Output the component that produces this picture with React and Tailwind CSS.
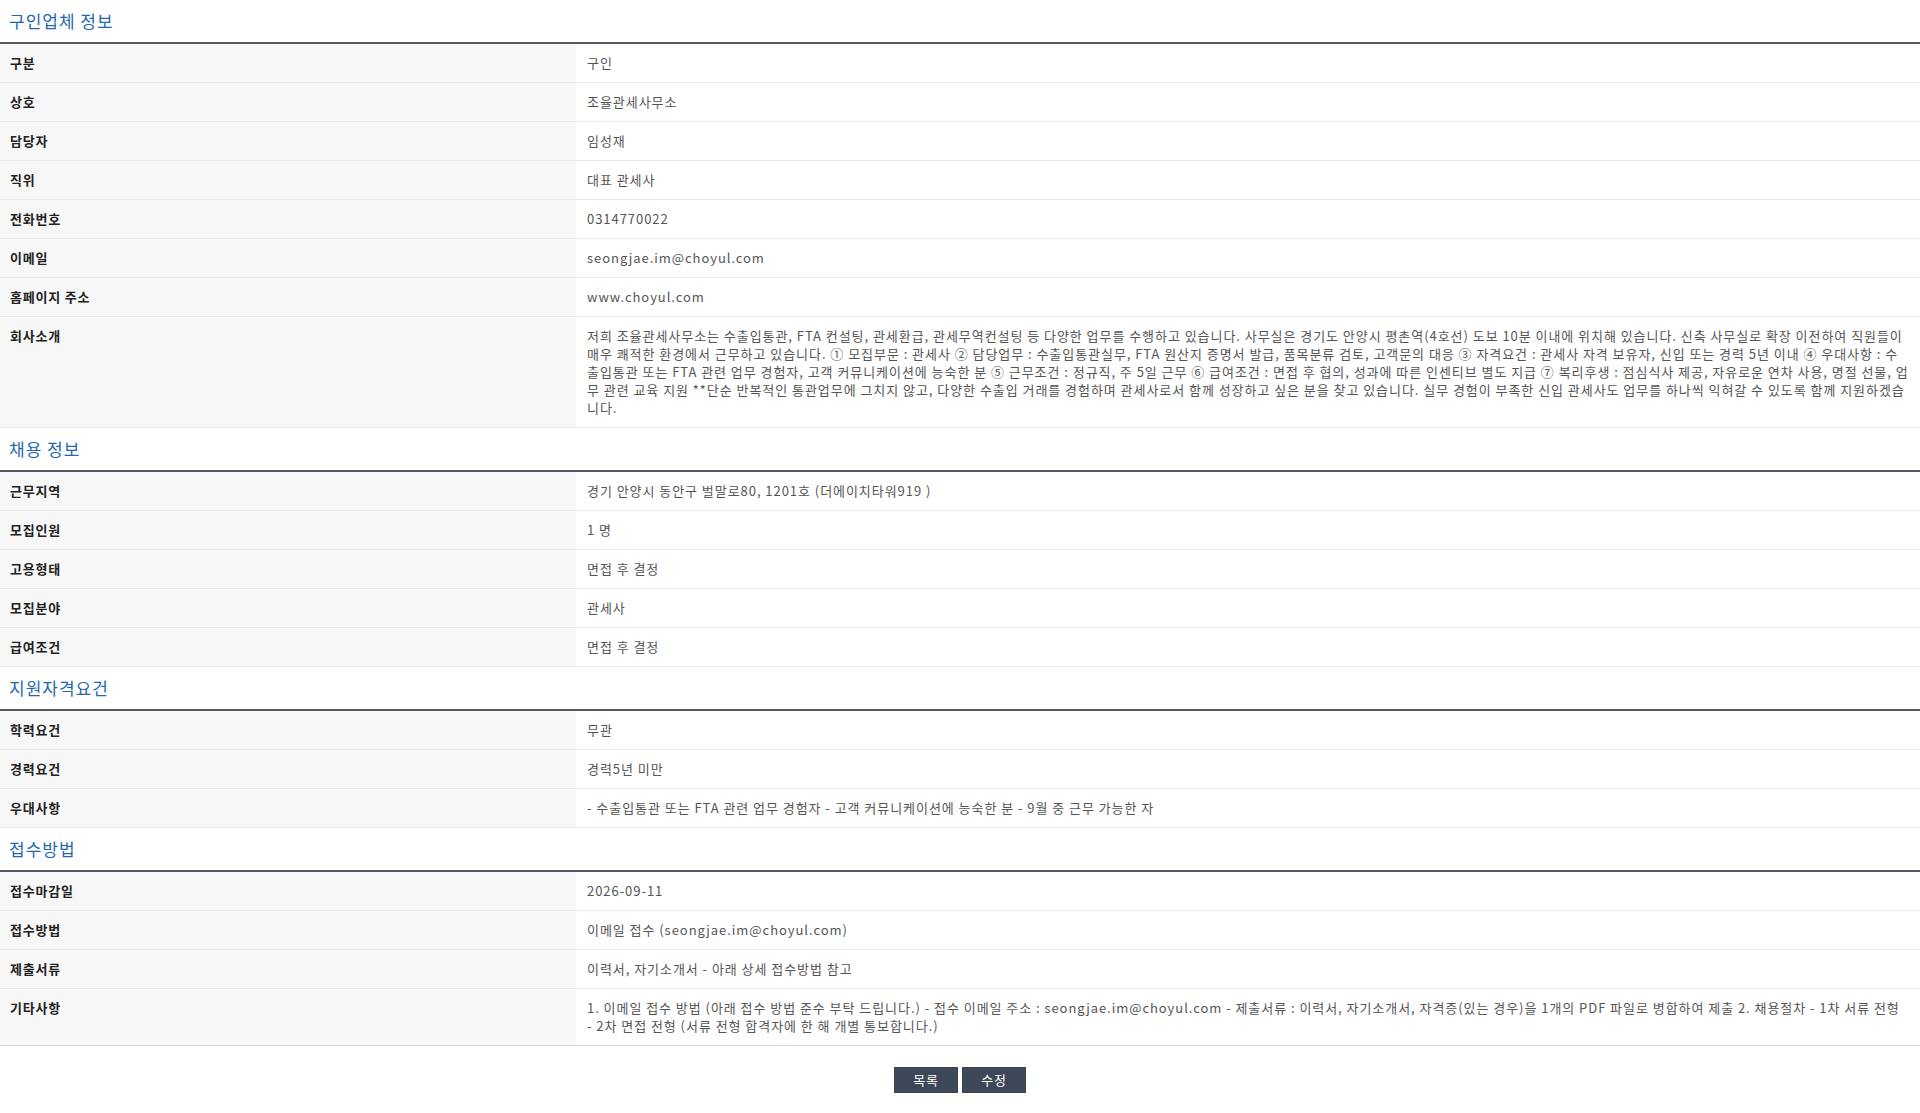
// 구인 상세 페이지 —— 구인업체 / 채용 / 지원자격 / 접수방법
const sections = [
  {
    title: '구인업체 정보',
    rows: [
      ['구분', '구인'],
      ['상호', '조율관세사무소'],
      ['담당자', '임성재'],
      ['직위', '대표 관세사'],
      ['전화번호', '0314770022'],
      ['이메일', 'seongjae.im@choyul.com'],
      ['홈페이지 주소', 'www.choyul.com'],
      [
        '회사소개',
        '저희 조율관세사무소는 수출입통관, FTA 컨설팅, 관세환급, 관세무역컨설팅 등 다양한 업무를 수행하고 있습니다. 사무실은 경기도 안양시 평촌역(4호선) 도보 10분 이내에 위치해 있습니다. 신축 사무실로 확장 이전하여 직원들이 매우 쾌적한 환경에서 근무하고 있습니다. ① 모집부문 : 관세사 ② 담당업무 : 수출입통관실무, FTA 원산지 증명서 발급, 품목분류 검토, 고객문의 대응 ③ 자격요건 : 관세사 자격 보유자, 신입 또는 경력 5년 이내 ④ 우대사항 : 수출입통관 또는 FTA 관련 업무 경험자, 고객 커뮤니케이션에 능숙한 분 ⑤ 근무조건 : 정규직, 주 5일 근무 ⑥ 급여조건 : 면접 후 협의, 성과에 따른 인센티브 별도 지급 ⑦ 복리후생 : 점심식사 제공, 자유로운 연차 사용, 명절 선물, 업무 관련 교육 지원 **단순 반복적인 통관업무에 그치지 않고, 다양한 수출입 거래를 경험하며 관세사로서 함께 성장하고 싶은 분을 찾고 있습니다. 실무 경험이 부족한 신입 관세사도 업무를 하나씩 익혀갈 수 있도록 함께 지원하겠습니다.',
      ],
    ],
  },
  {
    title: '채용 정보',
    rows: [
      ['근무지역', '경기 안양시 동안구 벌말로80, 1201호 (더에이치타워919 )'],
      ['모집인원', '1 명'],
      ['고용형태', '면접 후 결정'],
      ['모집분야', '관세사'],
      ['급여조건', '면접 후 결정'],
    ],
  },
  {
    title: '지원자격요건',
    rows: [
      ['학력요건', '무관'],
      ['경력요건', '경력5년 미만'],
      ['우대사항', '- 수출입통관 또는 FTA 관련 업무 경험자 - 고객 커뮤니케이션에 능숙한 분 - 9월 중 근무 가능한 자'],
    ],
  },
  {
    title: '접수방법',
    rows: [
      ['접수마감일', '2026-09-11'],
      ['접수방법', '이메일 접수 (seongjae.im@choyul.com)'],
      ['제출서류', '이력서, 자기소개서 - 아래 상세 접수방법 참고'],
      [
        '기타사항',
        '1. 이메일 접수 방법 (아래 접수 방법 준수 부탁 드립니다.) - 접수 이메일 주소 : seongjae.im@choyul.com - 제출서류 : 이력서, 자기소개서, 자격증(있는 경우)을 1개의 PDF 파일로 병합하여 제출 2. 채용절차 - 1차 서류 전형 - 2차 면접 전형 (서류 전형 합격자에 한 해 개별 통보합니다.)',
      ],
    ],
  },
]

function Section({ title, rows, last }) {
  return (
    <section>
      <h3 className="flex h-[44px] items-center border-b-2 border-[#555a63] pl-[9px] text-[17px] font-normal tracking-[1px] text-[#2469ae]">
        {title}
      </h3>
      <div>
        {rows.map(([label, value], i) => (
          <div
            key={label}
            className={`grid grid-cols-[576px_1fr] border-b ${
              last && i === rows.length - 1 ? 'border-[#d5d5d5]' : 'border-[#e8e8e8]'
            }`}
          >
            <div className="bg-[#f7f7f7] px-[10px] py-[10px] text-[13px] leading-[18px] font-bold tracking-[0.8px] text-[#222]">
              {label}
            </div>
            <div className="bg-white px-[11px] py-[10px] text-[13px] leading-[18px] break-all tracking-[0.95px] text-[#555]">
              {value}
            </div>
          </div>
        ))}
      </div>
    </section>
  )
}

export default function App() {
  return (
    <div className="min-h-screen bg-white font-['Noto_Sans_CJK_KR','Noto_Sans',sans-serif]">
      {sections.map((s, i) => (
        <Section key={s.title} {...s} last={i === sections.length - 1} />
      ))}

      {/* 하단 버튼 */}
      <div className="flex justify-center gap-[4px] pt-[21px]">
        <button
          type="button"
          className="h-[26px] w-[64px] bg-[#3e4757] text-[13px] tracking-[0.8px] text-white"
        >
          목록
        </button>
        <button
          type="button"
          className="h-[26px] w-[64px] bg-[#3e4757] text-[13px] tracking-[0.8px] text-white"
        >
          수정
        </button>
      </div>
    </div>
  )
}
